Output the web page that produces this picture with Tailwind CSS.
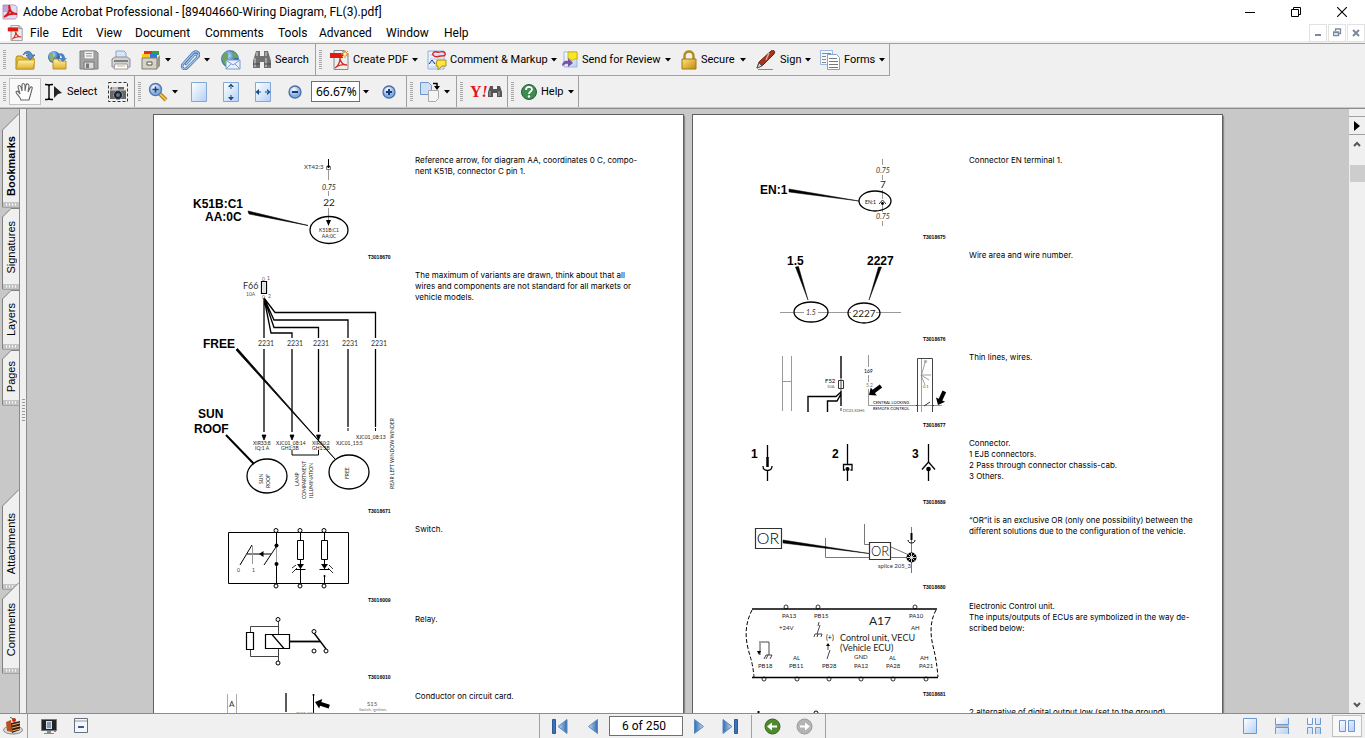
<!doctype html>
<html lang="en">
  <head>
    <meta charset="UTF-8" />
    <meta name="viewport" content="width=device-width, initial-scale=1.0" />
    <title>Adobe Acrobat Professional - [89404660-Wiring Diagram, FL(3).pdf]</title>
    <script src="https://cdn.jsdelivr.net/npm/@tailwindcss/browser@4"></script>
  </head>
  <body class="flex h-screen w-screen flex-col overflow-hidden bg-[#f0f0f0] font-['Liberation_Sans',sans-serif] text-[11px] leading-4 text-black">
    <!-- shared shapes -->
    <svg class="absolute h-0 w-0" aria-hidden="true">
      <defs>
        <linearGradient id="folder" x2="0" y2="1"><stop stop-color="#fff3a0" /><stop offset="1" stop-color="#e0b030" /></linearGradient>
        <linearGradient id="paper" x2="1" y2="1"><stop stop-color="#fff" /><stop offset="1" stop-color="#b4d0f2" /></linearGradient>
        <linearGradient id="nav" x2="1" y2="0"><stop stop-color="#2f6bb0" /><stop offset="1" stop-color="#c4dcf4" /></linearGradient>
        <linearGradient id="navback" x1="1" x2="0" y2="0"><stop stop-color="#2f6bb0" /><stop offset="1" stop-color="#c4dcf4" /></linearGradient>
        <linearGradient id="gold" x2="1" y2="1"><stop stop-color="#ffe27a" /><stop offset="1" stop-color="#c08a10" /></linearGradient>
        <radialGradient id="globe" cx=".4" cy=".3"><stop stop-color="#b8dcff" /><stop offset="1" stop-color="#2a62b0" /></radialGradient>
        <radialGradient id="lens" cx=".4" cy=".3"><stop stop-color="#fff" /><stop offset="1" stop-color="#86aede" /></radialGradient>
        <symbol id="caret" viewBox="0 0 6 4"><path d="M0 0h6L3 3.5z" /></symbol>
        <symbol id="pdf" viewBox="0 0 20 20">
          <path d="M5 .5h10l4 4v15H5z" fill="#eee" stroke="#888" />
          <path d="M15 .5v4h4" fill="#ccc" stroke="#888" />
          <path d="M1 3h13v5H1z" fill="#e01a10" />
          <path d="M11 8c0 4-2 8-5 10M11 9c1 4 4 6 7 6-4-1-8 0-11 2" fill="none" stroke="#d8281c" stroke-width="1.3" />
        </symbol>
        <symbol id="fat" viewBox="-16 -5 17 10" overflow="visible"><path d="M0 0l-6-5v3h-9v4h9v3z" /></symbol>
      </defs>
    </svg>

    <header class="bg-white font-[Roboto,sans-serif] text-xs">
      <div class="flex h-6 items-center">
        <svg class="ml-0.5 h-4 w-4" viewBox="0 0 16 16"><path d="M1 1h12l2 2v10l-2 2H1z" fill="#e6dcf0" stroke="#b7a0c8" /><path d="M1 1h7v7H1z" fill="#a06abf" opacity=".5" /><path d="M7 1c2 4 0 9-5 12M7 3c1 5 4 7 8 7-5-1-9 0-13 3" fill="none" stroke="#d81c1c" stroke-width="2" /></svg>
        <h1 class="ml-[5px] whitespace-nowrap">Adobe Acrobat Professional - [89404660-Wiring Diagram, FL(3).pdf]</h1>
        <div class="ml-auto flex h-full">
          <button class="grid w-[46px] place-items-center" aria-label="Minimize"><svg width="10" height="10"><path d="M0 5.5h10" stroke="#000" /></svg></button>
          <button class="grid w-[46px] place-items-center" aria-label="Restore"><svg width="10" height="10" fill="none" stroke="#000"><path d="M.5 2.5h7v7h-7zM2.5 2V.5h7v7H8" /></svg></button>
          <button class="grid w-[46px] place-items-center" aria-label="Close"><svg width="10" height="10"><path d="M0 0l10 10M10 0L0 10" stroke="#000" stroke-width="1.1" /></svg></button>
        </div>
      </div>
      <nav class="flex h-[19px] items-center border-b-2 border-[#f0f0f0]">
        <svg class="ml-[7px] h-4 w-4 shrink-0"><use href="#pdf" /></svg>
        <button class="ml-[7px] w-8 text-left">File</button>
        <button class="w-[34px] text-left">Edit</button>
        <button class="w-[39px] text-left">View</button>
        <button class="w-[70px] text-left">Document</button>
        <button class="w-[73px] text-left">Comments</button>
        <button class="w-[41px] text-left">Tools</button>
        <button class="w-[67px] text-left">Advanced</button>
        <button class="w-[58px] text-left">Window</button>
        <button class="text-left">Help</button>
        <div class="ml-auto flex gap-px">
          <button class="grid h-[18px] w-[18px] place-items-center border border-[#e2e2e2]" aria-label="Minimize document"><svg width="8" height="8"><path d="M1 5h6v2H1z" fill="#7a8a9c" /></svg></button>
          <button class="grid h-[18px] w-[18px] place-items-center border border-[#e2e2e2]" aria-label="Restore document"><svg width="9" height="9" fill="none" stroke="#7a8a9c"><path d="M.5 4.5h5v3h-5zM0 4h6M2.5 3V1h5v4.500H6M2 1h6" stroke-width="1.300" /></svg></button>
          <button class="grid h-[18px] w-[18px] place-items-center border border-[#e2e2e2]" aria-label="Close document"><svg width="8" height="8"><path d="M1 1l6 6M7 1L1 7" stroke="#7a8a9c" stroke-width="2" /></svg></button>
        </div>
      </nav>
    </header>

    <div class="border-t border-[#a0a0a0] font-[Roboto,sans-serif] whitespace-nowrap [&_svg]:shrink-0">
      <div class="flex h-8">
        <div class="flex border-r border-b border-[#a0a0a0]">
          <span class="my-1.5 mr-[3px] ml-[3px] w-[3px] bg-[repeating-linear-gradient(#a8a8a8_0_1px,transparent_1px_2px)]"></span>
          <button class="grid w-8 place-items-center" aria-label="Open">
            <svg width="20" height="20"><path d="M1 8l1-2h5l1 2h11v11H1z" fill="#e8c040" stroke="#b08a20" /><path d="M1 19l2-9h17l-2 9z" fill="url(#folder)" stroke="#c09a28" /><path d="M8 5c2-5 8-5 9 0h3l-5 5-4-5h3c-1-2-4-2-6 0z" fill="#5c8fc8" stroke="#2f5f98" stroke-width=".7" /></svg>
          </button>
          <button class="grid w-8 place-items-center" aria-label="Open web page">
            <svg width="20" height="20"><circle cx="7" cy="7" r="6" fill="url(#globe)" /><path d="M3 3c3-1 4 1 3 3s2 3 0 5-4-2-4-5z" fill="#86b070" /><path d="M6 11l1-2h4l1 2h7v8H6z" fill="url(#folder)" stroke="#b8922a" /><path d="M11 4c4-2 7 1 7 4h2l-4 4-4-4h3c0-2-2-3-4-4z" fill="#4d82c0" /></svg>
          </button>
          <button class="grid w-8 place-items-center" aria-label="Save">
            <svg width="20" height="20"><path d="M1 1h16l2 2v16H1z" fill="#a4a4a4" stroke="#808080" /><path d="M5 1h10v8H5z" fill="#f2f2f2" stroke="#8c8c8c" /><path d="M7 3.500h6M7 6h6" stroke="#999" /><path d="M5 12h10v7H5z" fill="#ddd" stroke="#777" /><path d="M7 13.500h3V18H7z" fill="#777" /></svg>
          </button>
          <button class="grid w-8 place-items-center" aria-label="Print">
            <svg width="20" height="20"><path d="M5 8V1h8l2 2v5z" fill="#d6e6fa" stroke="#8aa6cc" /><path d="M1 9l3-2h12l3 2v8H1z" fill="#d2d2d2" stroke="#8e8e8e" /><path d="M3 11h14" stroke="#666" stroke-width="1.500" /><path d="M4 14h12l1 5H3z" fill="#fff" stroke="#999" /><path d="M6 16h8" stroke="#e0b080" /></svg>
          </button>
          <button class="flex w-[38px] items-center gap-1 pl-1" aria-label="Organizer">
            <svg width="20" height="20"><path d="M3 1h9v5H3z" fill="#e03020" /><path d="M11 1h7v4h-7z" fill="#30a040" /><path d="M1 4h8v4H1z" fill="#ffc820" /><path d="M9 4h7v4H9z" fill="#3878d0" /><path d="M1 8h15v11H1z" fill="#d6d2c4" stroke="#807c6c" /><path d="M16 8l3-3v11l-3 3z" fill="#9a968a" /><path d="M6 12h5v3H6z" fill="#fff" stroke="#555" /></svg>
            <svg width="6" height="4"><use href="#caret" /></svg>
          </button>
          <button class="flex w-10 items-center gap-1 pl-[5px]" aria-label="Attach">
            <svg width="20" height="20" fill="none" stroke-linecap="round"><path d="M6 14L14 5c2-2 5 0 3 3L8 17c-3 4-8 1-5-3L13 3c3-3 8 0 5 4" stroke="#3d6aa4" stroke-width="2.600" /><path d="M6 14L14 5c2-2 5 0 3 3L8 17c-3 4-8 1-5-3L13 3c3-3 8 0 5 4" stroke="#a9c8ee" stroke-width="1.200" /></svg>
            <svg width="6" height="4"><use href="#caret" /></svg>
          </button>
          <button class="grid w-8 place-items-center" aria-label="Email">
            <svg width="20" height="20"><circle cx="9" cy="9" r="8.500" fill="url(#globe)" stroke="#2b5c9c" stroke-width=".6" /><path d="M3 4c4-3 5 0 4 3s3 3 0 7-6-3-6-6zM11 2c4 0 6 3 6 6-4 1-6-3-6-6z" fill="#68a858" /><path d="M5 10h14v9H5z" fill="#e8f2ff" stroke="#7b9cc8" /><path d="M5 10l7 5 7-5M5 19l5-5M19 19l-5-5" fill="none" stroke="#7b9cc8" /></svg>
          </button>
          <button class="flex w-[68px] items-center gap-[3px] pl-[5px]">
            <svg width="20" height="20"><path d="M4 1h4v5h4V1h4l3 10v7h-7v-6H8v6H1v-7z" fill="#707070" /><path d="M3 8v9M14 8v9M5 2v4M14 2v4" stroke="#b8b8b8" stroke-width="1.500" /><path d="M1 14h7M12 14h7" stroke="#444" /></svg>
            Search
          </button>
        </div>
        <div class="flex border-r border-b border-[#a0a0a0]">
          <span class="my-1.5 mr-[3px] ml-[3px] w-[3px] bg-[repeating-linear-gradient(#a8a8a8_0_1px,transparent_1px_2px)]"></span>
          <button class="flex w-[98px] items-center gap-1 pr-1.5 pl-1">
            <svg width="20" height="20"><use href="#pdf" /><path d="M16 0v8M12 4h8M13 1l6 6M19 1l-6 6" stroke="#e88a30" /><circle cx="16" cy="4" r="1.500" fill="#fff2a0" /></svg>
            Create PDF<svg class="ml-auto" width="6" height="4"><use href="#caret" /></svg>
          </button>
          <button class="flex w-[135px] items-center gap-[3px] pr-1.5 pl-1">
            <svg width="20" height="20"><path d="M1 1h16v18H1z" fill="#eaf2fc" stroke="#90b0dc" /><path d="M3 5h13M3 9h13M3 13h13M3 17h13" stroke="#b4cbea" /><path d="M7 6c-3-2 0-5 3-4s7-2 8 1-1 3-4 3-4 2-7 0z" fill="none" stroke="#e02020" stroke-width="1.400" /><path d="M2 14l3-4 3 4" fill="none" stroke="#1c30a0" /><path d="M10 10h9v6h-4l-4 4v-4H9z" fill="#ffe540" stroke="#b09010" /></svg>
            Comment &amp; Markup<svg class="ml-auto" width="6" height="4"><use href="#caret" /></svg>
          </button>
          <button class="flex w-[119px] items-center gap-1 pr-1.5 pl-1">
            <svg width="16" height="18"><path d="M2 1h13v15H2z" fill="url(#paper)" stroke="#9cb8e0" /><path d="M6 1h9v7h-3l-3 3V8H6z" fill="#f8e820" stroke="#b8a010" stroke-width=".7" /><path d="M0 15c0-4 3-6 6-5V7l5 5-5 4v-3c-3-1-4 2-6 2z" fill="#7a50a8" /></svg>
            Send for Review<svg class="ml-auto" width="6" height="4"><use href="#caret" /></svg>
          </button>
          <button class="flex w-[75px] items-center gap-1 pr-1.5 pl-1">
            <svg width="16" height="20"><path d="M3.500 10V6c0-6 9-6 9 0v4" fill="none" stroke="#b08a1c" stroke-width="2.400" /><path d="M1 9h14v10H1z" fill="url(#gold)" stroke="#a07808" /></svg>
            Secure<svg class="ml-auto" width="6" height="4"><use href="#caret" /></svg>
          </button>
          <button class="flex w-16 items-center gap-1 pr-1.5 pl-1">
            <svg width="20" height="20"><path d="M2 19.500h15" stroke="#888" /><path d="M1 18l2-6L15 1c2-2 5 0 3 3L7 15z" fill="#a83420" stroke="#6a2014" /><path d="M1 18l2-5 3 3z" fill="#ddd" stroke="#555" /><path d="M13 3l-3 7" stroke="#e0b0a0" stroke-width="1.300" /></svg>
            Sign<svg class="ml-auto" width="6" height="4"><use href="#caret" /></svg>
          </button>
          <button class="flex w-[73px] items-center gap-1 pr-1.5 pl-1">
            <svg width="20" height="20"><path d="M.5.500h12v14H.500z" fill="#f4f8fe" stroke="#98b8e0" /><path d="M2 3.500h9M2 6.500h4M2 9.500h4M2 12.500h4" stroke="#888" /><path d="M7.500 4.500h9l3 3v12h-12z" fill="#fff" stroke="#7ea2d4" /><path d="M9 8.500h8M9 11.500h9M9 14.500h9M9 17.500h9" stroke="#777" /></svg>
            Forms<svg class="ml-auto" width="6" height="4"><use href="#caret" /></svg>
          </button>
        </div>
      </div>

      <div class="flex h-8 border-b border-[#c8c8c8]">
        <div class="flex border-r border-[#a0a0a0]">
          <span class="my-1.5 mr-[3px] ml-[3px] w-[3px] bg-[repeating-linear-gradient(#a8a8a8_0_1px,transparent_1px_2px)]"></span>
          <button class="my-0.5 grid w-8 place-items-center border border-[#c4c4c4] bg-[#fafafa]" aria-label="Hand tool">
            <svg width="20" height="20"><path d="M6 18c-1-4-5-6-5-8 1-2 3 0 4 2L3 5c0-2 2-2 3 0l1 4V3c0-2 2-2 3 0v6l1-6c1-2 3-1 3 1l-1 6 2-4c1-2 3-1 2 1-1 4-2 7-3 11z" fill="#fff" stroke="#666" stroke-width="1.100" /></svg>
          </button>
          <button class="flex w-[60px] items-center gap-[5px] pl-1">
            <svg width="17" height="20"><path d="M0 2.500c3 0 4 0 4 2v11c0 2-1 2-4 2M8 2.500c-3 0-4 0-4 2v11c0 2 1 2 4 2" fill="none" stroke="#000" stroke-width="1.400" /><path d="M9 4l8 7-4 1-4 4z" fill="#222" /></svg>
            Select
          </button>
          <button class="grid w-[33px] place-items-center" aria-label="Snapshot">
            <svg width="20" height="20"><path d="M.5.500h19v19H.500z" fill="none" stroke="#333" stroke-dasharray="3 2" /><path d="M3 5h13v3h2v9H2V7z" fill="#666" /><path d="M4 5h6v3H4z" fill="#bbb" /><path d="M2 8h16" stroke="#ddd" /><circle cx="10" cy="13" r="4.500" fill="#222" stroke="#999" /><circle cx="10" cy="13" r="2" fill="#5078b0" /></svg>
          </button>
        </div>
        <div class="flex border-r border-[#a0a0a0]">
          <span class="my-1.5 mr-[3px] ml-[3px] w-[3px] bg-[repeating-linear-gradient(#a8a8a8_0_1px,transparent_1px_2px)]"></span>
          <button class="flex w-[39px] items-center gap-1 pl-1" aria-label="Zoom in tool">
            <svg width="20" height="20"><path d="M11 11l7 7" stroke="#b88820" stroke-width="4" /><path d="M11 11l7 7" stroke="#f0d060" stroke-width="1.500" /><circle cx="7.500" cy="7.500" r="6" fill="url(#lens)" stroke="#5078b8" stroke-width="1.400" /><path d="M4.500 7.500h6M7.500 4.500v6" stroke="#1c3c80" stroke-width="1.600" /></svg>
            <svg width="6" height="4"><use href="#caret" /></svg>
          </button>
          <button class="grid w-8 place-items-center" aria-label="Actual size"><svg width="16" height="20"><path d="M.5.500h15v19H.500z" fill="url(#paper)" stroke="#82a8d8" /></svg></button>
          <button class="grid w-8 place-items-center" aria-label="Fit page"><svg width="16" height="20"><path d="M.5.500h15v19H.500z" fill="url(#paper)" stroke="#82a8d8" /><path d="M8 1.500L5 5h6zM8 18.500L5 15h6zM7.500 4h1v3h-1zM7.500 13h1v3h-1z" fill="#174a8c" /></svg></button>
          <button class="grid w-8 place-items-center" aria-label="Fit width"><svg width="16" height="20"><path d="M.5.500h15v19H.500z" fill="url(#paper)" stroke="#82a8d8" /><path d="M.5 10L4 7v6zM15.500 10L12 7v6zM3 9.500h3v1H3zM10 9.500h3v1h-3z" fill="#174a8c" /></svg></button>
          <button class="grid w-8 place-items-center" aria-label="Zoom out"><svg width="14" height="14"><circle cx="7" cy="7" r="6" fill="url(#lens)" stroke="#4a70aa" stroke-width="1.300" /><path d="M4 7h6" stroke="#173a7c" stroke-width="2" /></svg></button>
          <input class="my-[5px] w-[49px] border border-[#707070] bg-white pl-1 font-['Noto_Sans',sans-serif] text-xs" value="66.67%" aria-label="Zoom level" />
          <button class="grid w-3 place-items-center" aria-label="Zoom presets"><svg width="6" height="4"><use href="#caret" /></svg></button>
          <button class="grid w-[34px] place-items-center" aria-label="Zoom in"><svg width="14" height="14"><circle cx="7" cy="7" r="6" fill="url(#lens)" stroke="#4a70aa" stroke-width="1.300" /><path d="M4 7h6M7 4v6" stroke="#173a7c" stroke-width="2" /></svg></button>
        </div>
        <div class="flex border-r border-[#a0a0a0]">
          <span class="my-1.5 mr-[3px] ml-[3px] w-[3px] bg-[repeating-linear-gradient(#a8a8a8_0_1px,transparent_1px_2px)]"></span>
          <button class="flex w-10 items-center gap-1 pl-1" aria-label="Rotate">
            <svg width="20" height="20"><path d="M.5.500h8l3 3v9H.500z" fill="#cfe0f6" stroke="#6d94cc" /><path d="M8.500 8.500h10v8l-3 3h-7z" fill="#f4f4f4" stroke="#aaa" /><path d="M13 1.500h4V5" fill="none" stroke="#000" stroke-width="1.500" /><path d="M14 4h6l-3 4z" /></svg>
            <svg width="6" height="4"><use href="#caret" /></svg>
          </button>
        </div>
        <div class="flex border-r border-[#a0a0a0]">
          <span class="my-1.5 mr-[3px] ml-[3px] w-[3px] bg-[repeating-linear-gradient(#a8a8a8_0_1px,transparent_1px_2px)]"></span>
          <button class="flex w-[41px] items-center pl-1" aria-label="Yahoo search">
            <span class="font-['Liberation_Serif',serif] text-base leading-4 font-bold text-[#e8101c]">Y<i>!</i></span>
            <svg width="14" height="12"><path d="M2 0h3v3h4V0h3l2 6v5H9V7H5v4H0V6z" fill="#555" /><path d="M2 5v5M11 5v5" stroke="#aaa" /></svg>
          </button>
        </div>
        <div class="flex border-r border-[#a0a0a0]">
          <span class="my-1.5 mr-[3px] ml-[3px] w-[3px] bg-[repeating-linear-gradient(#a8a8a8_0_1px,transparent_1px_2px)]"></span>
          <button class="flex w-[61px] items-center gap-1 pr-1.5 pl-1">
            <svg width="16" height="16"><circle cx="8" cy="8" r="7.500" fill="#3f8c50" stroke="#24603a" /><path d="M5 6c0-4 6-4 6-.500 0 2-3 2-3 4.500" fill="none" stroke="#fff" stroke-width="1.800" /><circle cx="8" cy="12.500" r="1.200" fill="#fff" /></svg>
            Help<svg class="ml-auto" width="6" height="4"><use href="#caret" /></svg>
          </button>
        </div>
      </div>
    </div>

    <main class="flex min-h-0 flex-1 border-y border-[#8c8c8c]">
      <!-- navigation tabs -->
      <nav class="flex w-5 flex-col border-r border-[#8c8c8c] bg-[#c8c8c8] pt-1">
        <button class="relative flex h-[95px] items-end justify-end pb-3 font-bold">
          <svg class="absolute right-0 bottom-0" width="17" height="95"><path d="M17 .500L.500 17v77H17" fill="#f0f0f0" stroke="#808080" /><path d="M1 89h16v5H1z" fill="#c4c4c4" /><path d="M4 91.500h11" stroke="#fff" stroke-width="2" stroke-dasharray="1 2" /></svg>
          <span class="relative rotate-180 [writing-mode:vertical-rl]">Bookmarks</span>
        </button>
        <button class="relative flex h-[82px] items-end justify-end pb-4">
          <svg class="absolute right-0 bottom-0" width="17" height="82"><path d="M17 .500H9L.500 9v72H17" fill="#f0f0f0" stroke="#808080" /><path d="M1 76h16v5H1z" fill="#c4c4c4" /><path d="M4 78.500h11" stroke="#fff" stroke-width="2" stroke-dasharray="1 2" /></svg>
          <span class="relative rotate-180 [writing-mode:vertical-rl]">Signatures</span>
        </button>
        <button class="relative flex h-[60px] items-end justify-end pb-[14px]">
          <svg class="absolute right-0 bottom-0" width="17" height="60"><path d="M17 .500H9L.500 9v50H17" fill="#f0f0f0" stroke="#808080" /><path d="M1 54h16v5H1z" fill="#c4c4c4" /><path d="M4 56.500h11" stroke="#fff" stroke-width="2" stroke-dasharray="1 2" /></svg>
          <span class="relative rotate-180 [writing-mode:vertical-rl]">Layers</span>
        </button>
        <button class="relative flex h-[56px] items-end justify-end pb-[14px]">
          <svg class="absolute right-0 bottom-0" width="17" height="56"><path d="M17 .500H9L.500 9v46H17" fill="#f0f0f0" stroke="#808080" /><path d="M1 50h16v5H1z" fill="#c4c4c4" /><path d="M4 52.500h11" stroke="#fff" stroke-width="2" stroke-dasharray="1 2" /></svg>
          <span class="relative rotate-180 [writing-mode:vertical-rl]">Pages</span>
        </button>
        <button class="relative mt-auto flex h-[101px] items-end justify-end pb-4">
          <svg class="absolute right-0 bottom-0" width="17" height="101"><path d="M17 .500L.500 17v83H17" fill="#f0f0f0" stroke="#808080" /><path d="M1 95h16v5H1z" fill="#c4c4c4" /><path d="M4 97.500h11" stroke="#fff" stroke-width="2" stroke-dasharray="1 2" /></svg>
          <span class="relative rotate-180 [writing-mode:vertical-rl]">Attachments</span>
        </button>
        <button class="relative -mt-2 mb-[39px] flex h-[92px] items-end justify-end pb-[18px]">
          <svg class="absolute right-0 bottom-0" width="17" height="92"><path d="M17 .500L.500 17v74H17" fill="#f0f0f0" stroke="#808080" /><path d="M1 86h16v5H1z" fill="#c4c4c4" /><path d="M4 88.500h11" stroke="#fff" stroke-width="2" stroke-dasharray="1 2" /></svg>
          <span class="relative rotate-180 [writing-mode:vertical-rl]">Comments</span>
        </button>
      </nav>
      <div class="flex w-[7px] items-center justify-center border-r border-[#8c8c8c] bg-[#f0f0f0]">
        <span class="h-6 w-[3px] bg-[repeating-linear-gradient(#999_0_1px,transparent_1px_3px)]"></span>
      </div>

      <div class="flex min-w-0 flex-1 justify-center gap-2 overflow-hidden bg-[#c8c8c8] pt-[5px] font-[Inter,sans-serif] text-[8px] leading-[11px]">
        <article class="h-[760px] w-[531px] shrink-0 border border-[#606060] bg-white pt-10 shadow-[1px_2px_1px_#888]">
          <section class="flex h-[115px]">
            <svg class="shrink-0 font-['Lato',sans-serif]" width="261" height="115" viewBox="154 155 261 115">
              <path d="M328.500 159v9" stroke="#000" /><path d="M326.500 166.500h4v3h-4z" fill="none" stroke="#777" /><circle cx="328.500" cy="166.500" r="1.300" />
              <path d="M328.500 170v10M328.500 191v5M328.500 208v13" stroke="#999" /><path d="M326 220h5l-2.500 6z" />
              <ellipse cx="329" cy="230" rx="19" ry="13.500" fill="none" stroke="#000" stroke-width="1.300" />
              <path d="M248 211l1 3 59 11.500z" stroke="#000" stroke-width=".6" />
              <g class="text-[6px]" fill="#333"><text x="304" y="169">XT42:3</text></g>
              <g class="text-[5px]" text-anchor="middle" fill="#222"><text x="329" y="232">K51B:C1</text><text x="329" y="238">AA:0C</text></g>
              <text x="329" y="190" class="text-[7px] italic" text-anchor="middle" fill="#222">0.75</text>
              <text x="329" y="206" class="text-[10px]" text-anchor="middle" fill="#222">22</text>
              <g class="font-['Liberation_Sans'] text-xs font-bold"><text x="193" y="208">K51B:C1</text><text x="205" y="221">AA:0C</text></g>
              <text x="368" y="259" class="font-['Liberation_Sans'] text-[5px] font-bold">T3018670</text>
            </svg>
            <p class="whitespace-nowrap">Reference arrow, for diagram AA, coordinates 0 C, compo-<br />nent K51B, connector C pin 1.</p>
          </section>
          <section class="flex h-[254px]">
            <svg class="shrink-0 font-['Lato',sans-serif]" width="261" height="254" viewBox="154 270 261 254">
              <path d="M261.500 281.500h5v12h-5z" fill="none" stroke="#000" stroke-width="1.200" /><path d="M264 282v11" stroke="#999" stroke-width=".6" />
              <g fill="none" stroke="#000" stroke-width="1.300">
                <path d="M264 298v40M264 298l11 14.500h100.500V338M264 298l10 22h74v18M264 298l10 29.500h44.500V338M264 298l7 35h21v5" />
                <path d="M264 349v83M292 349v83M318.500 349v83M348 349v78M375.500 349v78" />
                <path d="M348 428v3M375.500 428v3M292 450v5h26.500v-5" stroke-width="1" />
                <path d="M226 435l28 29" stroke-width="2" />
                <ellipse cx="267" cy="476" rx="20" ry="17" /><ellipse cx="349" cy="472" rx="20" ry="17" />
              </g>
              <path d="M236 350l1.500-1.500L335 459zM262 435h4l-2 5zM290 435h4l-2 5zM316.500 435h4l-2 5z" stroke="#000" stroke-width=".8" />
              <text x="243" y="289" class="text-[9px]" fill="#333">F66</text>
              <g class="text-[5px]" fill="#555"><text x="246" y="296">10A</text><text x="267" y="280">1</text><text x="268" y="298">2</text><text x="262" y="281">0</text><text x="262" y="299">0</text></g>
              <g class="text-[7px]" text-anchor="middle" fill="#333"><text x="266" y="346">2231</text><text x="295" y="346">2231</text><text x="321" y="346">2231</text><text x="350" y="346">2231</text><text x="379" y="346">2231</text></g>
              <g class="text-[5px]" fill="#222">
                <text x="253" y="445">XIR33:8</text><text x="255" y="450">IQ:1 A</text><text x="276" y="445">XJC01_08:14</text><text x="281" y="450">GH1:3B</text>
                <text x="312" y="445">XIR50:2</text><text x="312" y="450">GH1:3B</text><text x="336" y="445">XJC01_15:5</text><text x="356" y="439">XJC01_08:13</text>
                <text transform="translate(263 484)rotate(-90)">SUN</text><text transform="translate(270 488)rotate(-90)">ROOF</text><text transform="translate(349 479)rotate(-90)">FREE</text>
                <text transform="translate(299 486)rotate(-90)">LAMP</text><text transform="translate(306 499)rotate(-90)">COMPARTMENT</text><text transform="translate(313 498)rotate(-90)">ILLUMINATION</text>
                <text transform="translate(394 489)rotate(-90)">REAR LEFT WINDOW WINDER</text>
              </g>
              <g class="font-['Liberation_Sans'] text-xs font-bold"><text x="203" y="348">FREE</text><text x="198" y="418">SUN</text><text x="194" y="433">ROOF</text></g>
              <text x="368" y="513" class="font-['Liberation_Sans'] text-[5px] font-bold">T3018671</text>
            </svg>
            <p class="whitespace-nowrap">The maximum of variants are drawn, think about that all<br />wires and components are not standard for all markets or<br />vehicle models.</p>
          </section>
          <section class="flex h-[90px]">
            <svg class="shrink-0 font-['Lato',sans-serif]" width="261" height="90" viewBox="154 524 261 90">
              <g fill="#fff" stroke="#000">
                <path d="M228.500 532.500h120v51h-120z" />
                <path d="M276.500 533v12M276.500 564v20M276 547l-12 18M252 545l-12 20M247 554h24M300.500 533v50M324.500 533v37M324.500 576v8M295.500 569.500h10M319.500 569.500h10" />
                <path d="M297.500 540.500h6v19h-6zM321.500 540.500h6v19h-6z" />
                <path d="M296 565l-4 3M297 568l-5 5M329 565l4 4M328 568l5 5" stroke-width=".8" />
                <circle cx="276" cy="530.500" r="2" /><circle cx="300" cy="530.500" r="2" /><circle cx="324" cy="530.500" r="2" />
                <circle cx="276" cy="586" r="2" /><circle cx="300" cy="586" r="2" /><circle cx="324" cy="586" r="2" />
              </g>
              <path d="M252.500 546v18M276.500 547v15" stroke="#999" />
              <path d="M259 554l4.500-3v6zM297 564h7l-3.500 5zM321 564h7l-3.500 5z" /><circle cx="276.500" cy="545.500" r="2" /><circle cx="276.500" cy="564" r="2" /><circle cx="324.500" cy="576" r="1" />
              <g class="text-[5px]" fill="#333"><text x="237" y="572">0</text><text x="252" y="572">1</text></g>
              <text x="368" y="602" class="font-['Liberation_Sans'] text-[5px] font-bold">T3016009</text>
            </svg>
            <p>Switch.</p>
          </section>
          <section class="flex h-[77px]">
            <svg class="shrink-0" width="261" height="77" viewBox="154 614 261 77">
              <g fill="#fff" stroke="#000">
                <path d="M278.500 622v12M250.500 632v-5.500h28M250.500 649v7.500h28M278.500 649v12" fill="none" stroke="#444" />
                <path d="M246.500 632.500h7v17h-7zM265.500 634.500h24v14h-24zM272 634.500l12 14" stroke-width="1.200" />
                <path d="M290 641.500h30" stroke-width="1.800" /><path d="M314 633l12 16" stroke-width="1.400" />
                <circle cx="278" cy="619.500" r="2" /><circle cx="278" cy="663" r="2" /><circle cx="314" cy="631.500" r="2" /><circle cx="314" cy="651" r="2" /><circle cx="326" cy="651" r="2" />
              </g>
              <text x="368" y="679" class="font-['Liberation_Sans'] text-[5px] font-bold">T3016010</text>
            </svg>
            <p>Relay.</p>
          </section>
          <section class="flex">
            <svg class="shrink-0 font-['Lato',sans-serif]" width="261" height="40" viewBox="154 691 261 40">
              <path d="M227.500 694v30M236.500 694v30" stroke="#aaa" /><path d="M286 693v19" stroke="#000" stroke-width="1.300" /><path d="M313.500 694v30" stroke="#000" /><circle cx="313.500" cy="695" r="1" />
              <use href="#fat" x="-16" y="-5" width="17" height="10" transform="translate(315 702)rotate(198)" />
              <text x="229" y="707" class="text-[8px]" fill="#333">A</text><text x="367" y="706" class="text-[6px]" fill="#555">S15</text>
              <g class="text-[4px]" fill="#777"><text x="359" y="711">Switch, ignition,</text><text x="296" y="715">TEXT: X40</text></g>
            </svg>
            <p>Conductor on circuit card.</p>
          </section>
        </article>

        <article class="h-[760px] w-[531px] shrink-0 border border-[#606060] bg-white pt-10 shadow-[1px_2px_1px_#888]">
          <section class="flex h-[95px]">
            <svg class="shrink-0 font-['Lato',sans-serif]" width="276" height="95" viewBox="693 155 276 95">
              <path d="M882.500 159v6M882.500 175v5M882.500 190v9M882.500 204v8M882.500 221v5" stroke="#999" />
              <ellipse cx="875" cy="201" rx="16" ry="10" fill="none" stroke="#000" stroke-width="1.300" />
              <path d="M879 204l3.500-4 3.500 4" fill="none" stroke="#333" /><circle cx="882.500" cy="203.500" r="1.400" />
              <path d="M789 189v3l70 9z" stroke="#000" stroke-width=".5" />
              <g class="text-[7px] italic" text-anchor="middle" fill="#333"><text x="883" y="173">0.75</text><text x="883" y="219">0.75</text></g>
              <text x="880" y="188" class="text-[10px]" fill="#222">7</text><text x="865" y="204" class="text-[5px]">EN:1</text>
              <text x="760" y="194" class="font-['Liberation_Sans'] text-xs font-bold">EN:1</text>
              <text x="923" y="239" class="font-['Liberation_Sans'] text-[5px] font-bold">T3018675</text>
            </svg>
            <p>Connector EN terminal 1.</p>
          </section>
          <section class="flex h-[102px]">
            <svg class="shrink-0 font-['Lato',sans-serif]" width="276" height="102" viewBox="693 250 276 102">
              <path d="M780 312.500h24M818 312.500h33M876 312.500h25" stroke="#999" />
              <g fill="none" stroke="#000" stroke-width="1.300"><ellipse cx="811" cy="312" rx="17" ry="10" /><ellipse cx="864" cy="313" rx="16" ry="10" /></g>
              <path d="M795.500 267l3-.500L808 300zM878.500 267h3L869 300z" stroke="#000" stroke-width=".5" />
              <text x="806" y="315" class="text-[7px] italic" fill="#333">1.5</text><text x="864" y="317" class="text-[10px]" text-anchor="middle" fill="#222">2227</text>
              <g class="font-['Liberation_Sans'] text-xs font-bold"><text x="787" y="265">1.5</text><text x="867" y="265">2227</text></g>
              <text x="923" y="341" class="font-['Liberation_Sans'] text-[5px] font-bold">T3018676</text>
            </svg>
            <p>Wire area and wire number.</p>
          </section>
          <section class="flex h-[86px]">
            <svg class="shrink-0 font-['Lato',sans-serif]" width="276" height="86" viewBox="693 352 276 86">
              <path d="M782.500 356v55M791.500 356v55M782 381.500h9M868.500 355v12M868.500 375v7M868.500 389v16.500H942" fill="none" stroke="#999" />
              <path d="M921.500 358v54M921.500 375l4-14M921 375h10M921 375l8 5M921 375l4 10" fill="none" stroke="#888" stroke-width=".8" />
              <g fill="none" stroke="#000"><path d="M841 356v22M841 391v15M841 392l-5 4.500h-28V412M841 394l-4 7h-9.500v11" stroke-width="1.400" /><path d="M838.500 380.500h5v8h-5z" stroke-width=".8" /><path d="M917.500 412v-53.500h15V412M841 378v14M841 408v3" stroke="#444" /><path d="M924 406l6-4M933 405.500h1M916 405.500h1" stroke="#333" /></g>
              <use href="#fat" x="-16" y="-5" width="17" height="10" transform="translate(869 395)rotate(143)" />
              <use href="#fat" x="-16" y="-5" width="17" height="10" transform="translate(938 405)rotate(115)" />
              <text x="825" y="383" class="text-[6px]">F52</text>
              <g class="text-[4px]" fill="#555"><text x="827" y="388">10A</text><text x="843" y="412">DC01:X0H5</text><text x="923" y="388">0.1</text><text x="924" y="363">D</text></g>
              <g class="text-[5px]"><text x="864" y="373">169</text><text x="866" y="387" fill="#777">5.2</text></g>
              <g class="text-[4px]"><text x="873" y="404">CENTRAL LOCKING</text><text x="873" y="410">REMOTE CONTROL</text></g>
              <text x="923" y="427" class="font-['Liberation_Sans'] text-[5px] font-bold">T3018677</text>
            </svg>
            <p>Thin lines, wires.</p>
          </section>
          <section class="flex h-[77px]">
            <svg class="shrink-0" width="276" height="77" viewBox="693 438 276 77">
              <g fill="none" stroke="#000" stroke-width="1.300">
                <path d="M767.500 445v13M767.500 471v10M763 466c0 6 9 6 9 0" /><path d="M767.500 457v10" stroke-width="2.500" />
                <path d="M847.500 444v20M847.500 470v11M845 470h-1.500v-5.500h8.500v5.500h-1.500" /><path d="M928.500 444v18M928.500 470v11M922 469.500l6.500-7.500 6.500 7.500" />
              </g>
              <circle cx="847.500" cy="469" r="2.100" /><circle cx="928.500" cy="469" r="2.300" />
              <g class="font-['Liberation_Sans'] text-xs font-bold"><text x="751" y="458">1</text><text x="832" y="458">2</text><text x="912" y="458">3</text></g>
              <text x="923" y="504" class="font-['Liberation_Sans'] text-[5px] font-bold">T3018689</text>
            </svg>
            <p class="whitespace-nowrap">Connector.<br />1 EJB connectors.<br />2 Pass through connector chassis-cab.<br />3 Others.</p>
          </section>
          <section class="flex h-[86px]">
            <svg class="shrink-0 font-['Lato',sans-serif]" width="276" height="86" viewBox="693 515 276 86">
              <path d="M825.500 538v19.500H911M864.500 524v20.500h6M891 547l18 8M911.500 527v46" fill="none" stroke="#777" />
              <path d="M783 540v3l86 10.500z" stroke="#000" stroke-width=".5" />
              <g fill="#fff" stroke="#333"><path d="M755.500 528.500h26v20h-26zM869.500 542.500h21v17h-21z" stroke-width="1.200" /></g>
              <path d="M911.500 533v7" stroke="#000" stroke-width="2" /><path d="M908 540c0 4 7 4 7 0" fill="none" stroke="#000" />
              <circle cx="911.500" cy="557.500" r="5" /><path d="M911.500 553v9M907 557.500h9M908.500 554.500l6 6M914.500 554.500l-6 6" stroke="#fff" stroke-width=".8" />
              <text x="768" y="544" class="text-base font-light" text-anchor="middle">OR</text><text x="880" y="556" class="text-[13px] font-light" text-anchor="middle">OR</text>
              <text x="878" y="568" class="text-[6px]" fill="#333">splice 205_3</text>
              <text x="923" y="589" class="font-['Liberation_Sans'] text-[5px] font-bold">T3018680</text>
            </svg>
            <p class="whitespace-nowrap">“OR”it is an exclusive OR (only one possibility) between the<br />different solutions due to the configuration of the vehicle.</p>
          </section>
          <section class="flex h-[106px]">
            <svg class="shrink-0 font-['Lato',sans-serif]" width="276" height="106" viewBox="693 601 276 106">
              <g fill="#fff" stroke="#333"><circle cx="786" cy="607" r="2" /><circle cx="818" cy="607" r="2" /><circle cx="915" cy="607" r="2" /><circle cx="764" cy="679" r="2" /><circle cx="797" cy="679" r="2" /><circle cx="829" cy="679" r="2" /><circle cx="861" cy="679" r="2" /><circle cx="893" cy="679" r="2" /><circle cx="926" cy="679" r="2" /></g>
              <path d="M752 609h185M752 677.500h186" stroke="#000" stroke-width="1.600" />
              <path d="M752 610C743 628 746 642 750 656q3 9 4 21M936 610c-6 11-6 24-3 36s4 20 5 31" fill="none" stroke="#000" stroke-dasharray="4 2" />
              <path d="M759 642h10v13M760 643v12M764 659l2-4h6l-2 4M768 655l-2 4M819 622l-1 4M820 625l-3 9M814 637l1-3h7l-1 3M818 634l-1 3M828 645v5M830 650l-3 9" fill="none" stroke="#333" stroke-width=".9" />
              <path d="M757 651h4l-2 4zM826 646l2-3 2 3z" />
              <g class="text-[6px]" fill="#222"><text x="782" y="618">PA13</text><text x="814" y="618">PB15</text><text x="909" y="618">PA10</text><text x="779" y="630">+24V</text><text x="911" y="630">AH</text>
                <text x="758" y="668">PB18</text><text x="789" y="668">PB11</text><text x="822" y="668">PB28</text><text x="854" y="668">PA12</text><text x="886" y="668">PA28</text><text x="919" y="668">PA21</text>
                <text x="793" y="660">AL</text><text x="854" y="659">GND</text><text x="889" y="660">AL</text><text x="920" y="660">AH</text></g>
              <text x="826" y="640" class="text-[7px]">(+)</text><text x="869" y="625" class="text-xs" fill="#222">A17</text>
              <g class="text-[9px]" fill="#222"><text x="840" y="641">Control unit, VECU</text><text x="840" y="651">(Vehicle ECU)</text></g>
              <text x="923" y="696" class="font-['Liberation_Sans'] text-[5px] font-bold">T3018681</text>
            </svg>
            <p class="whitespace-nowrap">Electronic Control unit.<br />The inputs/outputs of ECUs are symbolized in the way de-<br />scribed below:</p>
          </section>
          <section class="flex">
            <svg class="shrink-0" width="276" height="30" viewBox="693 707 276 30"><circle cx="816" cy="713" r="2" fill="#fff" stroke="#000" /><path d="M758.500 711v9" stroke="#000" stroke-width="2" /></svg>
            <p class="whitespace-nowrap">2 alternative of digital output low (set to the ground)</p>
          </section>
        </article>
      </div>

      <div class="flex w-4 flex-col items-center bg-[#f0f0f0]">
        <span class="h-2 w-full border-b border-[#a0a0a0]"></span>
        <button class="grid h-[18px] w-full place-items-center border-b border-[#a0a0a0]" aria-label="Page options"><svg width="6" height="10"><path d="M0 0l6 5-6 5z" /></svg></button>
        <button class="grid h-[18px] w-full place-items-center" aria-label="Scroll up"><svg width="8" height="6"><path d="M1 5l3-3 3 3" fill="none" stroke="#555" stroke-width="2" /></svg></button>
        <span class="mt-3 h-[17px] w-[15px] self-end bg-[#cdcdcd]"></span>
        <button class="mt-auto grid h-4 w-full place-items-center" aria-label="Scroll down"><svg width="8" height="6"><path d="M1 1l3 3 3-3" fill="none" stroke="#555" stroke-width="2" /></svg></button>
      </div>
    </main>

    <footer class="grid h-6 grid-cols-[1fr_auto_1fr]">
      <div class="flex items-center">
        <button class="flex h-full w-7 items-center border-r border-[#a0a0a0] pl-[3px]" aria-label="Organizer">
          <svg width="20" height="18"><ellipse cx="10" cy="13" rx="9.500" ry="4" fill="#ddd" stroke="#888" /><path d="M3 5l5-2 1 12-5-1z" fill="#b85020" /><path d="M8 6l9-2v9l-8 3z" fill="#3a1c10" /><path d="M9 8l8-2M9 11l8-2M9 14l8-2" stroke="#f0b060" /><circle cx="11" cy="3" r="2" fill="#e01818" /><path d="M10 2L7 0" stroke="#208030" /></svg>
        </button>
        <button class="ml-[13px]" aria-label="Full screen"><svg width="17" height="17"><path d="M.5 1.500h15v11H.500z" fill="#222" stroke="#777" /><path d="M5 3h6v8H5z" fill="#cfe0f6" /><path d="M6 5h4M6 7h4M6 9h4" stroke="#456" /><path d="M6 13h4v2h3v1H3v-1h3z" fill="#888" /><path d="M13 13h2v1h-2z" fill="#2c2" /></svg></button>
        <button class="ml-4" aria-label="Hide toolbars"><svg width="14" height="16"><path d="M.5.500h13v14H.500z" fill="#f4f7fb" stroke="#666f7c" /><path d="M1 3h12" stroke="#8c98a8" /><path d="M4 9h6" stroke="#3858a0" stroke-width="2" /></svg></button>
      </div>
      <div class="flex items-center border-x border-[#a0a0a0]">
        <button class="grid w-10 place-items-center" aria-label="First page"><svg width="16" height="15"><path d="M.5.500h3v14h-3z" fill="#3a74b8" stroke="#2a5a98" /><path d="M15 .500v14L6 7.500z" fill="url(#navback)" stroke="#5a88c0" /></svg></button>
        <button class="grid w-[26px] place-items-center" aria-label="Previous page"><svg width="10" height="15"><path d="M9.500.500v14L.500 7.500z" fill="url(#navback)" stroke="#5a88c0" /></svg></button>
        <input class="ml-[3px] h-5 w-[74px] border border-[#707070] bg-white pr-1 text-center font-[Roboto,sans-serif] text-xs" value="6 of 250" aria-label="Page number" />
        <button class="ml-[3px] grid w-[26px] place-items-center" aria-label="Next page"><svg width="10" height="15"><path d="M.5.500v14l9-7z" fill="url(#nav)" stroke="#5a88c0" /></svg></button>
        <button class="grid w-10 place-items-center border-r border-[#a0a0a0] py-1 pr-1" aria-label="Last page"><svg width="16" height="15"><path d="M12.500.500h3v14h-3z" fill="#3a74b8" stroke="#2a5a98" /><path d="M1 .500v14l9-7z" fill="url(#nav)" stroke="#5a88c0" /></svg></button>
        <button class="ml-3 mr-[15px]" aria-label="Previous view"><svg width="17" height="17"><circle cx="8.500" cy="8.500" r="7.500" fill="#4f8a2c" stroke="#35621c" /><path d="M3 8.500l5-4v3h5v2H8v3z" fill="#fff" /></svg></button>
        <button class="mr-3" aria-label="Next view"><svg width="17" height="17"><circle cx="8.500" cy="8.500" r="7.500" fill="#b4b4b4" stroke="#999" /><path d="M14 8.500l-5-4v3H4v2h5v3z" fill="#fff" /></svg></button>
      </div>
      <div class="flex items-center justify-end gap-[18px] pr-[3px]">
        <button aria-label="Single page"><svg width="14" height="16"><path d="M.5.500h13v15H.500z" fill="url(#paper)" stroke="#6d98d0" /></svg></button>
        <button aria-label="Continuous"><svg width="14" height="16"><path d="M.5 0v6.500h13V0M.5 16V9.500h13V16" fill="url(#paper)" stroke="#6d98d0" /><path d="M0 8h14" stroke="#888" /></svg></button>
        <button aria-label="Continuous facing"><svg width="14" height="16"><path d="M.5 0v6.500h5V0M8.500 0v6.500h5V0M.5 16V9.500h5V16M8.500 16V9.500h5V16" fill="url(#paper)" stroke="#6d98d0" /></svg></button>
        <button class="-ml-[7px] grid h-[22px] w-[30px] place-items-center border border-[#c0c0c0] bg-[#f8f8f8]" aria-label="Facing"><svg width="16" height="12"><path d="M.5.500h6v11h-6zM9.500.500h6v11h-6z" fill="url(#paper)" stroke="#6d98d0" /></svg></button>
      </div>
    </footer>
  </body>
</html>
